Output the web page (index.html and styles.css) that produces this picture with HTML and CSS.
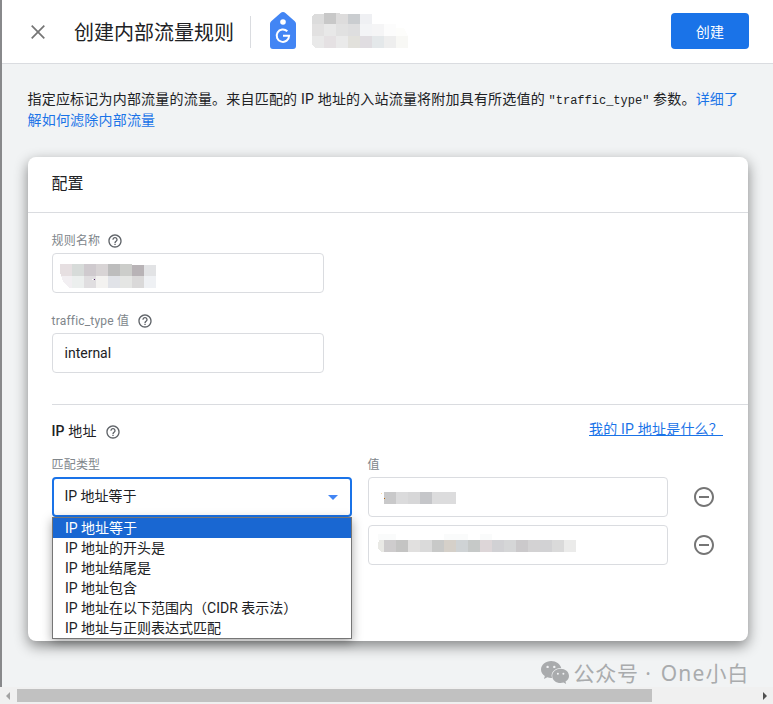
FILE: index.html
```html
<!DOCTYPE html>
<html lang="zh-CN">
<head>
<meta charset="utf-8">
<title>创建内部流量规则</title>
<link rel="stylesheet" href="styles.css">
</head>
<body>
<svg width="0" height="0" class="defs">
  <symbol id="help" viewBox="0 0 24 24"><path d="M11 18h2v-2h-2v2zm1-16C6.480 2 2 6.480 2 12s4.480 10 10 10 10-4.480 10-10S17.520 2 12 2zm0 18c-4.410 0-8-3.590-8-8s3.590-8 8-8 8 3.590 8 8-3.590 8-8 8zm0-14c-2.210 0-4 1.790-4 4h2c0-1.100.9-2 2-2s2 .9 2 2c0 2-3 1.750-3 5h2c0-2.250 3-2.500 3-5 0-2.210-1.790-4-4-4z"/></symbol>
  <symbol id="remove" viewBox="0 0 24 24"><path d="M7 11v2h10v-2H7zm5-9C6.480 2 2 6.480 2 12s4.480 10 10 10 10-4.480 10-10S17.520 2 12 2zm0 18c-4.410 0-8-3.590-8-8s3.590-8 8-8 8 3.590 8 8-3.590 8-8 8z"/></symbol>
</svg>
<div class="window">
  <header class="topbar">
    <svg class="close" viewBox="0 0 14 14"><path d="M.7.7l12.600 12.600M13.300.7L.7 13.300"/></svg>
    <h1>创建内部流量规则</h1>
    <span class="rule"></span>
    <svg class="tag" viewBox="0 0 26 37"><path d="M13 0c.9 0 1.700.3 2.400.9l9.400 8.300c.8.7 1.200 1.500 1.200 2.500V34a3 3 0 0 1-3 3H3a3 3 0 0 1-3-3V11.700c0-1 .4-1.800 1.200-2.500L10.600.9C11.300.3 12.100 0 13 0z" fill="#4285f4"/><circle cx="13" cy="10" r="2.800" fill="#fff"/><path d="M17.300 19.300A6.200 6.200 0 1 0 19.100 23.700H13" fill="none" stroke="#fff" stroke-width="2"/></svg>
    <svg class="account" viewBox="0 0 96 36" shape-rendering="crispEdges">
      <path fill="#dcdcdc" d="M2 2h10v10H0V4z"/><path fill="#c8c8c8" d="M12 1h12v11H12z"/><path fill="#dddcdc" d="M24 1h4v1h8v10H24z"/><path fill="#cacdd0" d="M36 2h12v10H36z"/><path fill="#eff0f3" d="M48 2h12v10H48z"/>
      <path fill="#e2e1e1" d="M0 12h12v12H0z"/><path fill="#e8e8e8" d="M12 12h12v12H12z"/><path fill="#e1e1e1" d="M24 12h12v12H24z"/><path fill="#dededf" d="M36 12h12v12H36z"/><path fill="#f3f4f6" d="M48 12h12v12H48z"/><path fill="#f5f5f6" d="M60 12h12v12H60z"/><path fill="#fcfcfc" d="M72 12h12v12H72z"/><path fill="#fdfdfb" d="M84 16h8l4 8H84z"/>
      <path fill="#e9e9e9" d="M0 24h12v12H3l-3-3z"/><path fill="#e5e1e3" d="M12 24h12v12H12z"/><path fill="#eaeaea" d="M24 24h12v12H24z"/><path fill="#e2e1dc" d="M36 24h12v12H36z"/><path fill="#e0dde1" d="M48 24h12v12H48z"/><path fill="#e4e8ea" d="M60 24h12v12H60z"/><path fill="#eee" d="M72 24h12v12H72z"/><path fill="#f8f8f5" d="M84 24h12v12H84z"/>
    </svg>
    <button class="create">创建</button>
  </header>

  <main>
    <p class="intro">指定应标记为内部流量的流量。来自匹配的 IP 地址的入站流量将附加具有所选值的 <code>″traffic_type″</code> 参数。<a>详细了<br>解如何滤除内部流量</a></p>

    <section class="card">
      <h2>配置</h2>
      <div class="body">
        <div class="label">规则名称 <svg class="help"><use href="#help"/></svg></div>
        <div class="field name">
          <svg width="96" height="24" shape-rendering="crispEdges">
            <path fill="#e6dfe1" d="M0 0h12v12H1L0 8z"/><path fill="#d7dbd9" d="M12 0h12v12H12z"/><path fill="#cfcace" d="M24 0h12v12H24z"/><path fill="#d8d4d5" d="M36 0h12v12H36z"/><path fill="#bdbdbd" d="M48 0h12v12H48z"/><path fill="#cccdca" d="M60 0h12v12H60z"/><path fill="#b8b3b6" d="M72 1h12v11H72z"/><path fill="#e2e3e5" d="M84 1h12v11H84z"/>
            <path fill="#f2eff2" d="M1 12h11v12H9L4 19z"/><path fill="#ecefee" d="M12 12h12v12H12z"/><path fill="#e0dee0" d="M24 12h12v12H24z"/><path fill="#f3f2f0" d="M36 12h12v12H36z"/><path fill="#e1e3e8" d="M48 12h12v12H48z"/><path fill="#e5e6e4" d="M60 12h12v12H60z"/><path fill="#dad9d9" d="M72 12h12v12H72z"/><path fill="#eff1f4" d="M84 12h12v12H84z"/>
            <path fill="#fff" d="M32 15h1v1h-1z"/><path fill="#4b2360" d="M34 15h1v1h-1z"/>
          </svg>
        </div>
        <div class="label second">traffic_type 值 <svg class="help"><use href="#help"/></svg></div>
        <div class="field text">internal</div>
        <div class="ip">
          <div class="ip-head">
            <h3><span><b>IP</b> 地址</span> <svg class="help"><use href="#help"/></svg></h3>
            <a class="what">我的 IP 地址是什么？</a>
          </div>
          <div class="grid">
            <div class="label small">匹配类型</div><div class="label small">值</div><span></span>
            <div class="select">IP 地址等于<i class="arrow"></i>
              <ul class="menu">
                <li class="on">IP 地址等于</li>
                <li>IP 地址的开头是</li>
                <li>IP 地址结尾是</li>
                <li>IP 地址包含</li>
                <li>IP 地址在以下范围内（CIDR 表示法）</li>
                <li>IP 地址与正则表达式匹配</li>
              </ul>
            </div>
            <div class="field value">
              <svg width="198" height="18" shape-rendering="crispEdges"><path fill="#c9c9ca" d="M6 6h12v12H6z"/><path fill="#dbdbdc" d="M18 6h12v12H18z"/><path fill="#d7d7d8" d="M30 6h12v12H30z"/><path fill="#c5c6c9" d="M42 6h12v12H42z"/><path fill="#dcdcdd" d="M54 6h24v12H54z"/><path fill="#b5690f" d="M6 12h1v1H6z"/><path fill="#f6d8a8" d="M3 7h1v1H3z"/></svg>
            </div>
            <svg class="remove"><use href="#remove"/></svg>
            <span></span>
            <div class="field value">
              <svg width="198" height="18" shape-rendering="crispEdges"><path fill="#fafbfb" d="M0 -1h18v7H0zM66 -1h24v7H66zM102 -1h12v7h-12z"/><path fill="#e9e9e5" d="M1 6h5v12H3l-2-3H0V8h1z"/><path fill="#cecccd" d="M6 6h12v12H6z"/><path fill="#c4c4c3" d="M18 6h12v12H18z"/><path fill="#e1e0df" d="M30 6h12v12H30z"/><path fill="#dadada" d="M42 6h12v12H42z"/><path fill="#c8c9c8" d="M54 6h12v12H54z"/><path fill="#d5d0c9" d="M66 6h12v12H66z"/><path fill="#cfd3d5" d="M78 6h12v12H78z"/><path fill="#c6c9c8" d="M90 6h12v12H90z"/><path fill="#ddd6d8" d="M102 6h12v12h-12z"/><path fill="#d1d1d4" d="M114 6h12v12h-12z"/><path fill="#d5d6d7" d="M126 6h12v12h-12z"/><path fill="#cbc9cb" d="M138 6h12v12h-12z"/><path fill="#d3d2d3" d="M150 6h12v12h-12z"/><path fill="#d2d2d4" d="M162 6h12v12h-12z"/><path fill="#dadada" d="M174 6h12v12h-12z"/><path fill="#ebebea" d="M186 6h12v12h-12z"/></svg>
            </div>
            <svg class="remove"><use href="#remove"/></svg>
          </div>
        </div>
      </div>
    </section>

    <div class="watermark">
      <svg viewBox="0 0 28 23"><path d="M10.200 0C4.600 0 0 3.800 0 8.500c0 2.700 1.500 5 3.800 6.600L3 18l3.300-1.700c1.200.4 2.600.6 3.900.6h.8C9.300 11.500 14 7 20.200 7.100 19.200 3 15.100 0 10.200 0z"/><path d="M28 14.900c0-4-3.800-7.100-8.400-7.100s-8.400 3.200-8.400 7.100 3.800 7.100 8.400 7.100c1 0 2-.2 2.900-.4L25.200 23l-.7-2.400c2.100-1.300 3.500-3.400 3.500-5.700z"/><g fill="#f1f2f4"><circle cx="6.600" cy="5.900" r="1.200"/><circle cx="13.300" cy="5.900" r="1.200"/><circle cx="16.900" cy="12.700" r="1"/><circle cx="22.400" cy="12.700" r="1"/></g></svg>
      <span>公众号 · <b>One</b>小白</span>
    </div>
  </main>
</div>
<div class="scrollbar"><i class="left"></i><span class="thumb"></span><i class="right"></i></div>
</body>
</html>
```
FILE: styles.css
```css
* { box-sizing: border-box; }
body {
  margin: 0;
  height: 704px;
  overflow: hidden;
  display: flex;
  flex-direction: column;
  background: #f1f3f4;
  color: #202124;
  font: 14px/20px Roboto, "Noto Sans CJK SC", sans-serif;
}
svg { display: block; flex: none; }
.defs { position: absolute; }
h1, h2, h3, p, ul { margin: 0; padding: 0; font-weight: 400; }
a { color: #1a73e8; }

.window { height: 687px; flex: none; border-left: 2px solid #88898b; }
.topbar {
  height: 64px;
  display: flex;
  align-items: center;
  padding: 0 24px 0 29px;
  background: #fff;
  border-bottom: 1px solid #dadce0;
}
.close { width: 14px; height: 14px; margin-top: 1px; fill: none; stroke: #757575; stroke-width: 1.7; }
h1 { width: 176px; margin: 3px 0 0 29px; font-size: 20px; line-height: 28px; white-space: nowrap; }
.rule { width: 1px; height: 32px; background: #dadce0; }
.tag { width: 26px; height: 37px; margin: -2px 16px 0 19px; }
.account { width: 96px; height: 36px; margin-top: -3px; }
.create {
  width: 78px;
  height: 36px;
  margin: -2px 0 0 auto;
  padding: 2px 0 0;
  border: 0;
  border-radius: 4px;
  background: #1a73e8;
  color: #fff;
  font: 400 14px/20px Roboto, "Noto Sans CJK SC", sans-serif;
  letter-spacing: .2px;
}

main { padding: 25px 25px 0 26px; }
.intro { margin-left: -.5px; letter-spacing: .2px; white-space: nowrap; height: 40px; }
code { font: 12px/18px "Liberation Mono", monospace; letter-spacing: 0; }

.card {
  height: 484px;
  margin-top: 28px;
  border-radius: 8px;
  background: #fff;
  box-shadow: 0 5px 14px rgba(0, 0, 0, .46);
}
h2 { height: 56px; padding: 15px 23.5px 0; border-bottom: 1px solid #dadce0; font-size: 16px; line-height: 24px; }
.body { padding: 18px 0 0 24px; }
.label { height: 20px; display: flex; align-items: center; gap: 7px; margin-left: -.5px; color: #80868b; font-size: 12px; letter-spacing: .2px; }
.second { gap: 8px; }
.help { width: 16px; height: 16px; fill: #5f6368; }
.field { height: 40px; border: 1px solid #dadce0; border-radius: 4px; }
.name, .text { width: 272px; margin: 2px 0 18px; }
.name { padding: 10px 7px; }
.text { padding: 9px 11.5px; margin-bottom: 31px; }
.ip { border-top: 1px solid #dadce0; padding-top: 16px; }
.ip-head { display: flex; justify-content: space-between; height: 20px; }
h3 { display: flex; align-items: center; gap: 8px; margin-left: -.5px; font-size: 14px; letter-spacing: .15px; height: 21px; }
h3 span { margin-top: -1px; }
h3 b { font-weight: 500; }
.what { margin: -2px 25px 0 0; letter-spacing: .2px; text-decoration: underline; }
.grid { display: grid; grid-template-columns: 300px 300px 24px; column-gap: 16px; row-gap: 8px; margin-top: 13px; align-items: center; }
.small { margin-bottom: -5px; padding-top: 1px; }
.value { padding: 8px 9px; }
.remove { width: 24px; height: 24px; margin-left: 7.5px; fill: #757575; }
.select {
  position: relative;
  height: 40px;
  padding: 7px 11px 7px 10.5px;
  border: 2px solid #1a73e8;
  border-radius: 4px;
  display: flex;
  justify-content: space-between;
}
.arrow { border: 5px solid transparent; border-top-color: #4285f4; border-bottom: 0; margin: 9px 1px 0 0; height: 0; }
.menu {
  position: absolute;
  z-index: 1;
  left: -2px;
  top: 38px;
  width: 300px;
  list-style: none;
  background: #fff;
  border: 1px solid #767676;
  box-shadow: 0 3px 10px rgba(0, 0, 0, .35);
}
.menu li { height: 20px; padding-left: 12px; line-height: 20px; white-space: nowrap; }
.menu .on { background: #1967d2; color: #fff; }

.watermark { display: flex; align-items: center; justify-content: flex-end; gap: 5px; height: 28px; margin: 18px -1px 0 0; color: #a9abad; font: 21px/28px "Noto Sans", "Noto Sans CJK SC", sans-serif; letter-spacing: .8px; white-space: nowrap; }
.watermark b { margin-left: 3px; font-weight: 400; letter-spacing: 1.1px; }
.watermark svg { width: 28px; height: 23px; margin-top: -2px; fill: #a9abad; }

.scrollbar { height: 17px; display: flex; align-items: center; background: #f0f0f0; }
.thumb { width: 635px; height: 13px; background: #c1c1c1; }
.left, .right { border: 4px solid transparent; }
.left { border-right-color: #a3a3a3; border-left: 0; margin: 0 7px 0 6px; }
.right { border-left-color: #505050; border-right: 0; margin: 0 6px 0 auto; }
```
